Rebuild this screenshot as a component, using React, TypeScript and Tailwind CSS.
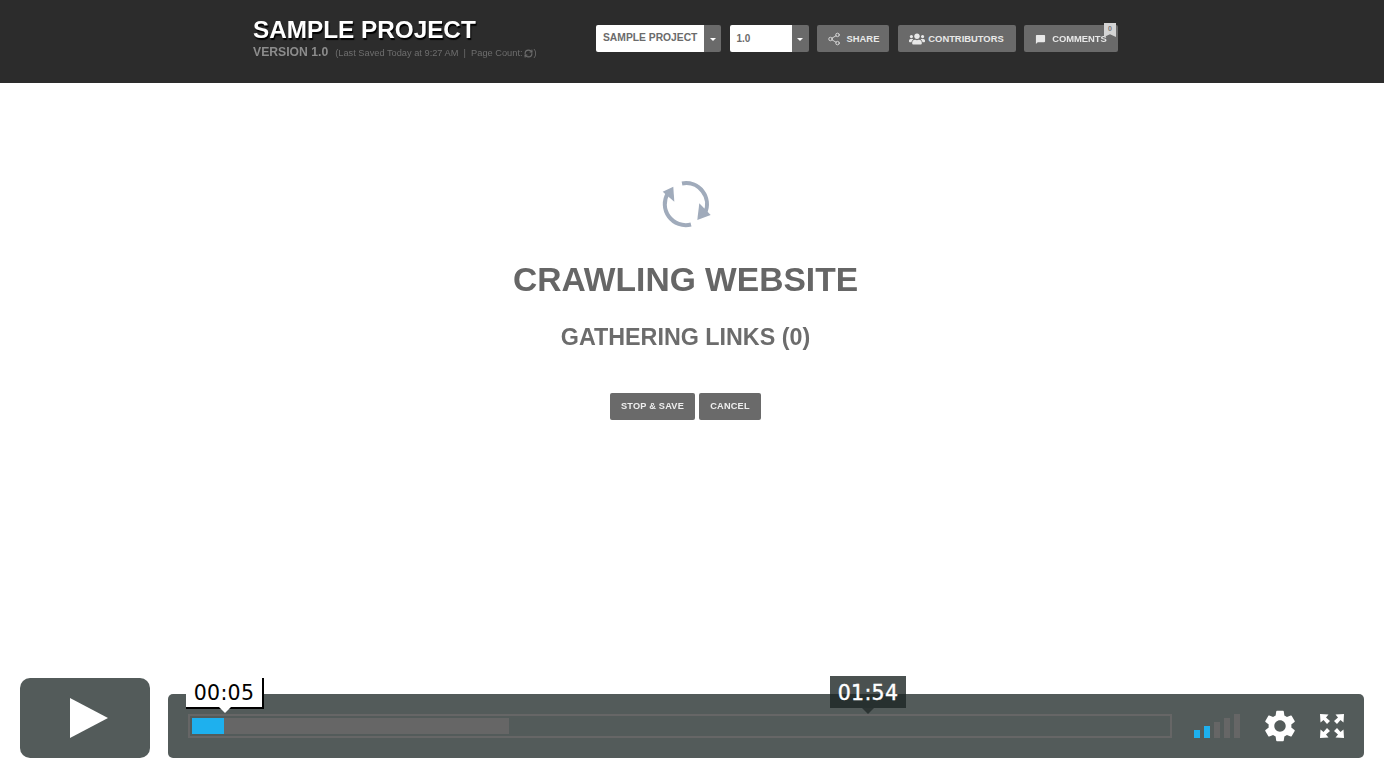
import { Share2, RefreshCw } from "lucide-react";
import { MdSettings, MdChatBubble } from "react-icons/md";
import { FaUsers } from "react-icons/fa";

function Caret() {
  return <span className="w-0 h-0 border-x-[3px] border-x-transparent border-t-[3px] border-t-white mt-[1px]" />;
}

function HeaderSelect({ label, boxW, small }: { label: string; boxW: string; small?: boolean }) {
  return (
    <div className="flex h-[27px] rounded-[2px] overflow-hidden">
      <div className={`${boxW} bg-white flex items-center pl-[7px] pb-[1px] font-bold text-[#6b6b6b] ${small ? "text-[10px]" : "text-[10.3px]"}`}>{label}</div>
      <div className="w-[17px] bg-[#6a6a6a] flex items-center justify-center"><Caret /></div>
    </div>
  );
}

function HeaderButton({ children, w }: { children: React.ReactNode; w: string }) {
  return (
    <div className={`${w} relative h-[27px] rounded-[2px] bg-[#6a6a6a] flex items-center justify-center gap-[5px] pt-[1px] text-[9.4px] font-bold text-[#e8e8e8]`}>
      {children}
    </div>
  );
}

export default function App() {
  return (
    <div className="relative h-[758px] w-[1384px] overflow-hidden bg-white flex flex-col font-['Liberation_Sans',sans-serif]">
      <header className="h-[83px] shrink-0 bg-[#2c2c2c] flex items-start pl-[253px]">
        <div className="flex items-start blur-[0.7px]">
          <div className="w-[343px] pt-[15px]">
            <div className="text-[24.3px] leading-[29px] font-bold text-white [text-shadow:1px_2px_1px_#000]">SAMPLE PROJECT</div>
            <div className="flex items-baseline mt-[1px]">
              <span className="text-[12.2px] leading-[14px] font-bold text-[#8c8c8c]">VERSION 1.0</span>
              <span className="ml-[7px] text-[9.25px] leading-[14px] text-[#6e6e6e] flex items-center">
                (Last Saved Today at 9:27 AM &nbsp;|&nbsp; Page Count: <RefreshCw size={9} strokeWidth={3} className="mx-[1px]" />)
              </span>
            </div>
          </div>
          <div className="flex gap-[8.5px] pt-[25px]">
            <HeaderSelect label="SAMPLE PROJECT" boxW="w-[108px]" />
            <HeaderSelect label="1.0" boxW="w-[62px]" small />
            <HeaderButton w="w-[72px]"><Share2 size={14} strokeWidth={1.4} className="mr-[1px]" /><span>SHARE</span></HeaderButton>
            <HeaderButton w="w-[118px]"><FaUsers size={16} /><span className="ml-[-2px]">CONTRIBUTORS</span></HeaderButton>
            <HeaderButton w="w-[94px]">
              <MdChatBubble size={11} /><span className="ml-[1px]">COMMENTS</span>
              <span className="absolute right-[2px] top-[-2px] w-[12px] h-[14px] bg-[#d4d4d4] text-[7px] leading-[11px] text-center text-[#777] [clip-path:polygon(0_0,100%_0,100%_100%,50%_80%,0_100%)]">0</span>
            </HeaderButton>
          </div>
        </div>
      </header>

      <main className="flex-1 flex flex-col items-center pt-[93px] pr-[13px] blur-[0.6px]">
        <svg width="56" height="56" viewBox="0 0 56 56" fill="none" className="shrink-0">
          <path d="M24 7.5A21 21 0 0 1 47 37" stroke="#a0abbb" strokeWidth="4" />
          <path d="M39.3 44L52.7 39L41.3 27.3Z" fill="#a0abbb" />
          <path d="M33 48.5A21 21 0 0 1 10 17" stroke="#a0abbb" strokeWidth="4" />
          <path d="M4.7 15.7L15.3 10.7L16.3 25.7Z" fill="#a0abbb" />
        </svg>
        <h1 className="mt-[29px] text-[33.6px] leading-[38px] font-bold text-[#666666]">CRAWLING WEBSITE</h1>
        <h2 className="mt-[24px] text-[23.3px] leading-[28px] font-bold text-[#6c6c6c]">GATHERING LINKS (0)</h2>
        <div className="mt-[42px] flex gap-[4px]">
          <div className="w-[85px] h-[27px] rounded-[2px] bg-[#6a6a6a] flex items-center justify-center text-[9.2px] font-bold text-[#eeeeee] tracking-[0.2px]">STOP &amp; SAVE</div>
          <div className="w-[62px] h-[27px] rounded-[2px] bg-[#6a6a6a] flex items-center justify-center text-[9.2px] font-bold text-[#eeeeee] tracking-[0.2px]">CANCEL</div>
        </div>
      </main>

      <div className="h-[80px] shrink-0 flex items-end px-[20px] gap-[18px] font-['DejaVu_Sans',sans-serif]">
        <div className="w-[130px] h-[80px] rounded-[10px] bg-[#535b5a] flex items-center justify-center pl-[8px]">
          <svg width="38" height="40" viewBox="0 0 38 40"><path d="M0 0L38 20L0 40Z" fill="white" /></svg>
        </div>
        <div className="relative w-[1196px] h-[64px] rounded-[5px] bg-[#535b5a] flex items-center pl-[20px] pr-[20px]">
          <div className="relative w-[984px] h-[24px] border-2 border-[#666666] p-[2px]">
            <div className="h-full w-[317px] bg-[#666666]">
              <div className="h-full w-[32px] bg-[#1eb0ee]" />
            </div>
            <div className="absolute left-[-4px] top-[-38px] w-[76px] h-[29px] pt-[1px] bg-white shadow-[2px_0_0_#000,2px_2px_0_#000,0_2px_0_#000] flex items-center justify-center text-[20.5px] leading-none tracking-[0.3px] text-black">
              00:05
              <span className="absolute left-[33px] bottom-[-6px] w-0 h-0 border-x-[6px] border-x-transparent border-t-[6px] border-t-white" />
            </div>
            <div className="absolute left-[640px] top-[-40px] w-[76px] h-[32px] pt-[2px] bg-[#1d2524]/80 flex items-center justify-center text-[20.5px] leading-none tracking-[0.3px] text-white [-webkit-text-stroke:0.4px_white]">
              01:54
              <span className="absolute left-[32px] bottom-[-6px] w-0 h-0 border-x-[6px] border-x-transparent border-t-[6px] border-t-[#2c3433]" />
            </div>
          </div>
          <div className="ml-[22px] h-[24px] flex items-end gap-[4px] w-[46px]">
            <span className="w-[6px] h-[8px] bg-[#1eb0ee]" />
            <span className="w-[6px] h-[12px] bg-[#1eb0ee]" />
            <span className="w-[6px] h-[16px] bg-[#666666]" />
            <span className="w-[6px] h-[20px] bg-[#666666]" />
            <span className="w-[6px] h-[24px] bg-[#666666]" />
          </div>
          <MdSettings size={38} className="ml-[21px] text-white shrink-0" />
          <svg width="24" height="24" viewBox="0 0 24 24" fill="white" className="ml-[21px] shrink-0">
            <path d="M0 0L8.5 0.5L6 3.5L10 7L7 10L3.5 6L0.5 8.5Z" />
            <path d="M24 0L15.5 0.5L18 3.5L14 7L17 10L20.5 6L23.5 8.5Z" />
            <path d="M0 24L8.5 23.5L6 20.5L10 17L7 14L3.5 18L0.5 15.5Z" />
            <path d="M24 24L15.5 23.5L18 20.5L14 17L17 14L20.5 18L23.5 15.5Z" />
          </svg>
        </div>
      </div>
    </div>
  );
}
